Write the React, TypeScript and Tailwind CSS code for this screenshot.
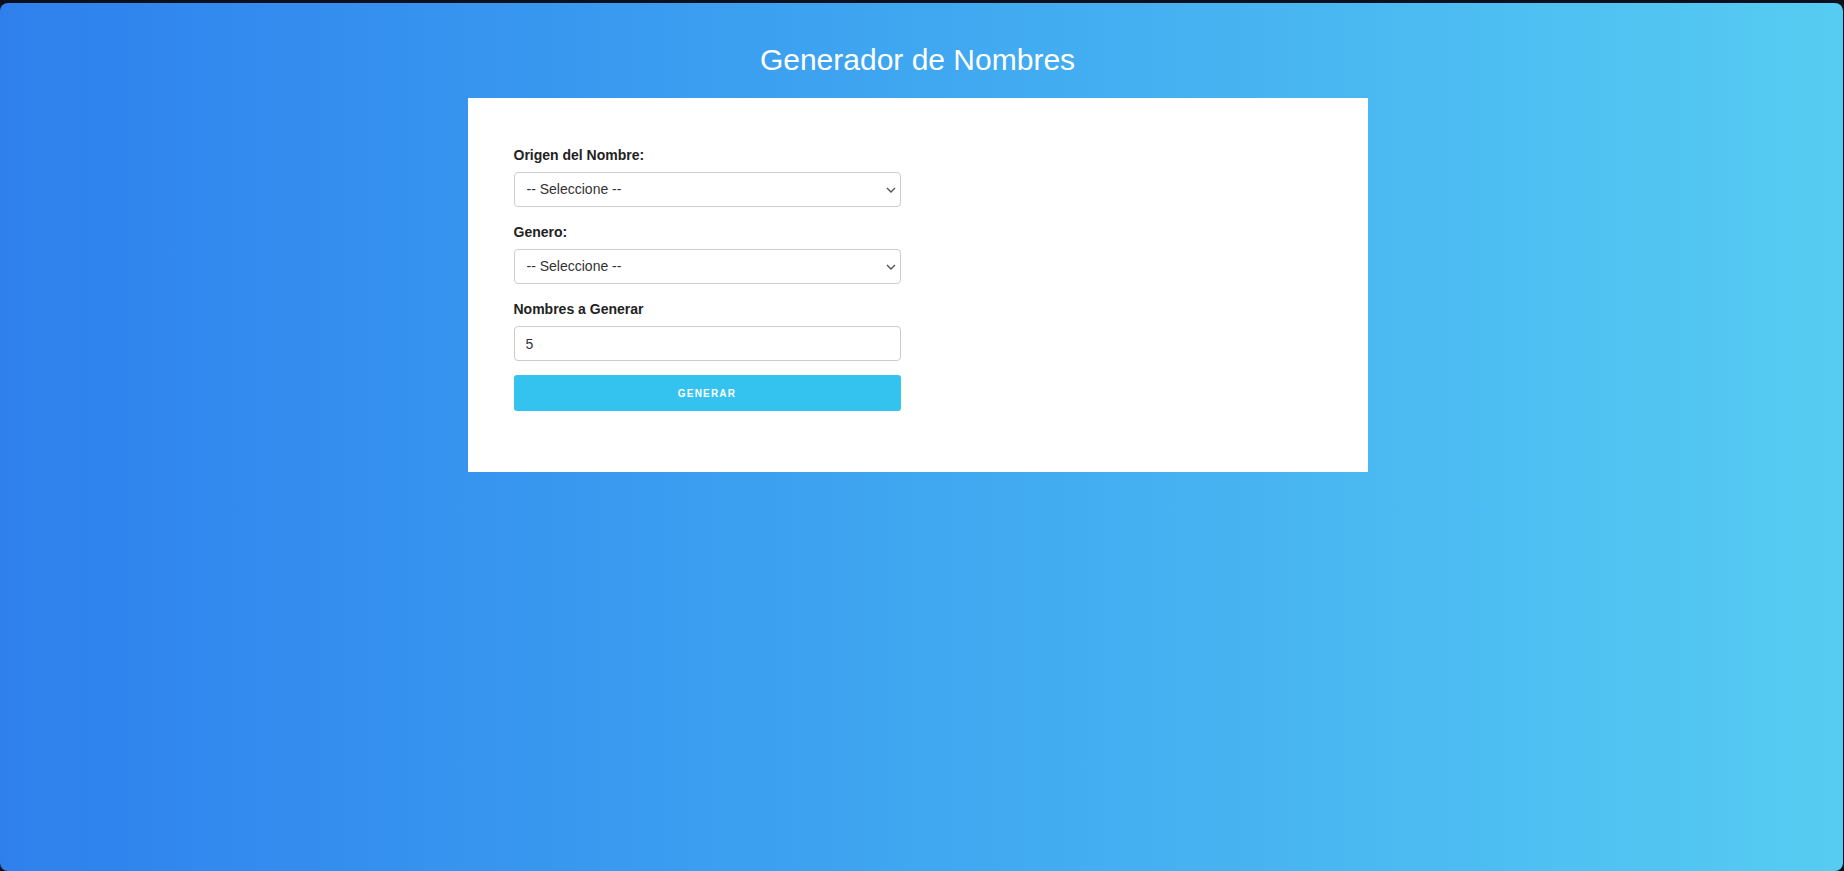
function SelectField({ label }: { label: string }) {
    return (
        <div className="mb-[17px]">
            <label className="block text-[14px] leading-[17px] font-bold text-[#222] mb-2">{label}</label>
            <div className="relative">
                <select className="w-full h-[35px] appearance-none rounded-[4px] border border-[#ccc] bg-white pl-[12px] pr-8 text-[14px] text-[#333] outline-none">
                    <option>-- Seleccione --</option>
                </select>
                {/* native-looking chevron */}
                <svg className="absolute right-[5px] top-[15px] pointer-events-none" width="10" height="6" viewBox="0 0 10 6">
                    <polyline points="1,1 5,5 9,1" fill="none" stroke="#555" strokeWidth="1.4" />
                </svg>
            </div>
        </div>
    );
}

export default function App() {
    return (
        <div className="h-screen bg-[#0b101c] pt-[3px] pr-[1px] overflow-hidden" style={{ fontFamily: '"Liberation Sans", Arial, sans-serif' }}>
            <div className="h-full rounded-lg bg-linear-to-r from-[#2f80ed] to-[#56ccf2] pr-[8px] pt-[40px]">
                <h1 className="text-center text-[30px] leading-[34px] text-white mb-[21px]">Generador de Nombres</h1>

                <div className="mx-auto w-[900px] h-[374px] bg-white pt-[49px] pl-[46px]">
                    <div className="w-[387px]">
                        <SelectField label="Origen del Nombre:" />
                        <SelectField label="Genero:" />

                        <div>
                            <label className="block text-[14px] leading-[17px] font-bold text-[#222] mb-2">Nombres a Generar</label>
                            <input
                                type="number"
                                defaultValue={5}
                                className="w-full h-[35px] rounded-[4px] border border-[#ccc] bg-white px-[11px] text-[14px] text-[#333] outline-none"
                            />
                        </div>

                        <button className="mt-[14px] w-full h-[36px] rounded-[3px] bg-[#33c3ee] text-white text-[10px] font-bold tracking-[1.2px]">
                            GENERAR
                        </button>
                    </div>
                </div>
            </div>
        </div>
    );
}
